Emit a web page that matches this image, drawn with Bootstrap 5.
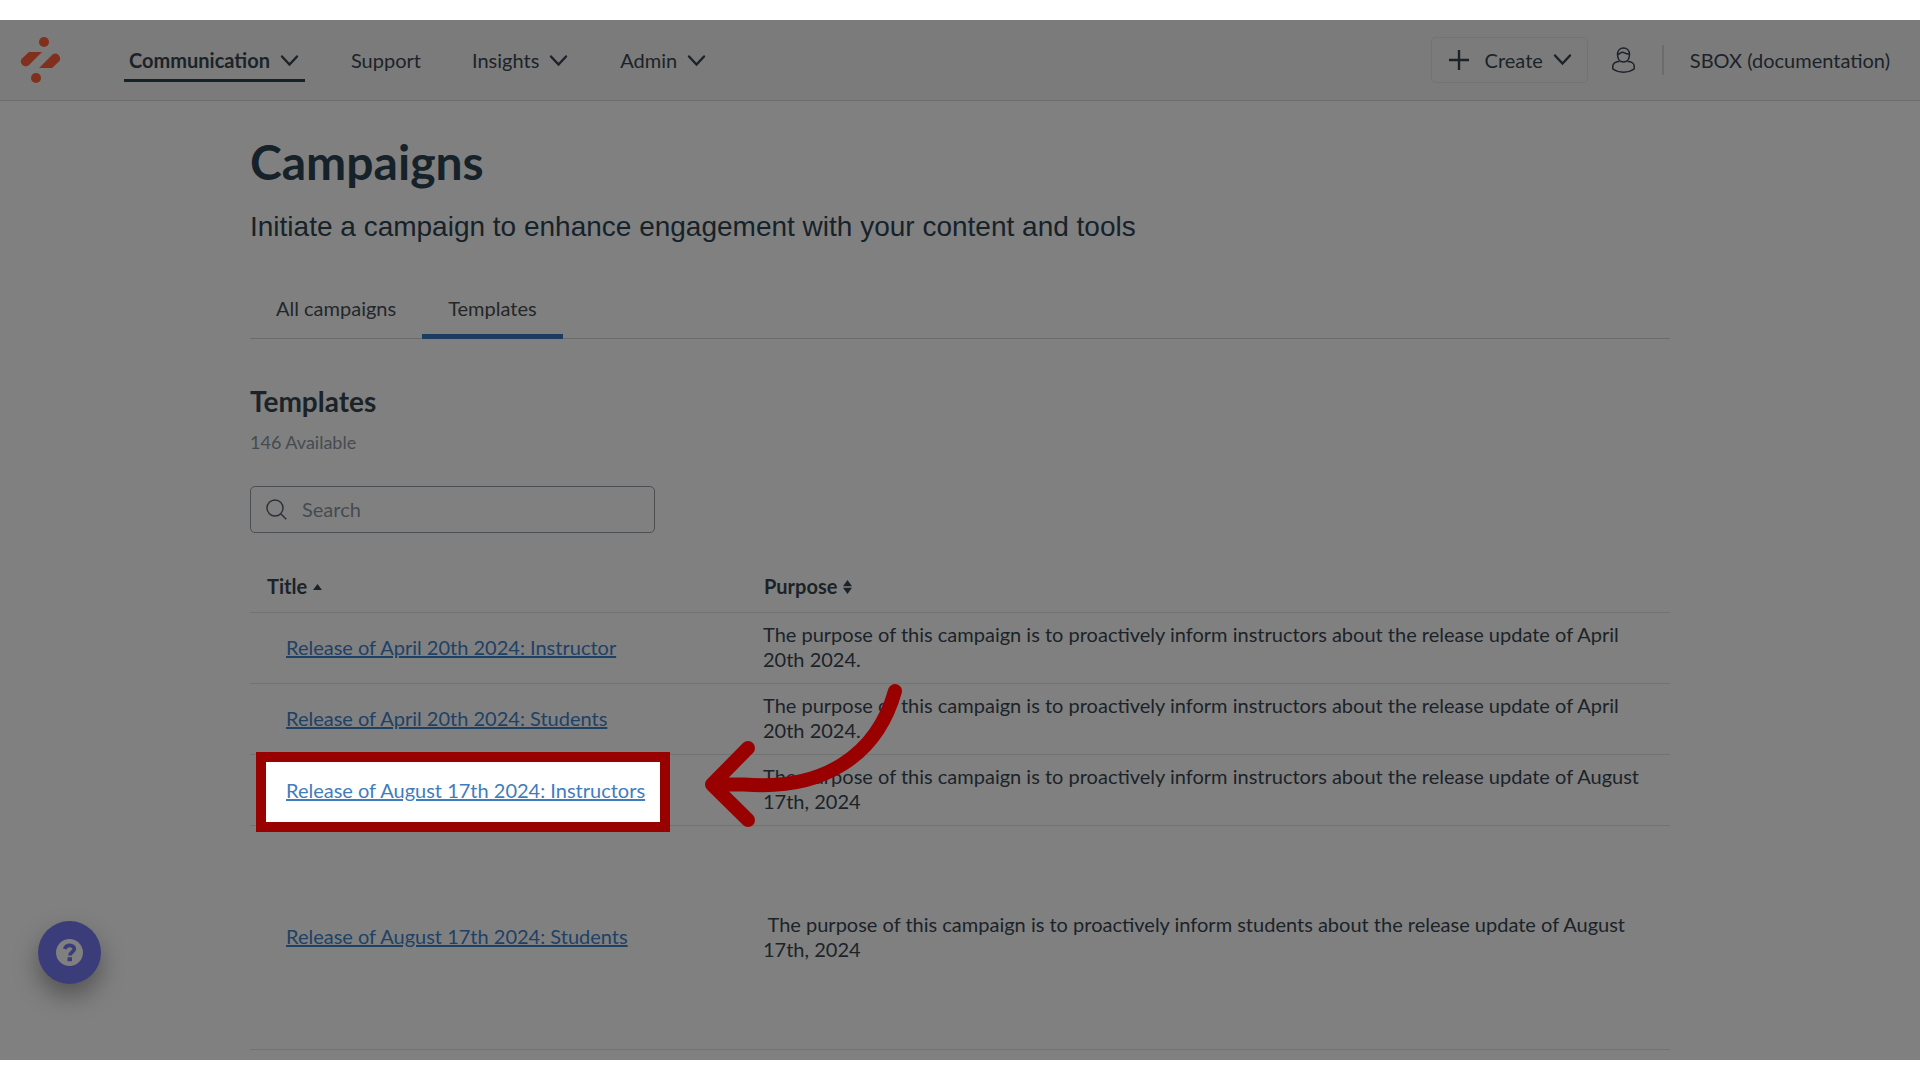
<!DOCTYPE html>
<html lang="en">
<head>
<meta charset="utf-8">
<meta name="viewport" content="width=device-width, initial-scale=1">
<title>Campaigns</title>
<link href="https://cdn.jsdelivr.net/npm/bootstrap@5.3.0/dist/css/bootstrap.min.css" rel="stylesheet">
<style>
  :root { --ink: #1b2329; --ink-strong: #16222a; --rule: #727272; --accent: #1b3b5f; --alert: #990000; }
  body { font-family: Lato, "Open Sans", sans-serif; font-size: 20px; line-height: 25px; color: var(--ink); background: #fff; padding: 20px 0; }
  .shell { background: #808080; min-height: calc(100vh - 40px); }
  .topbar { background: #7b7b7b; border-bottom: 1px solid #6e6e6e; height: 81px; padding: 0 30px 0 20px; }
  .topbar .nav-link { color: var(--ink); padding: 6px 5px; border-bottom: 3px solid transparent; margin-top: 4px; }
  .topbar .nav-link.active { font-weight: 700; border-bottom-color: var(--ink-strong); }
  .main-nav { gap: 41px; margin-left: 63px; }
  .create-btn { border: 1px solid #737373; border-radius: 4px; height: 46px; padding: 0 14px 0 17px; font-size: 20px; line-height: 25px; color: var(--ink); }
  .bar-split { width: 2px; height: 30px; background: #6b6b6b; margin: 0 26px 0 27px; }
  .page-wrap { max-width: 1420px; }
  .page-title { font-size: 48px; line-height: 58px; font-weight: 700; color: var(--ink-strong); margin: 32px 0 0; }
  .page-sub { font-family: "Liberation Sans", Arial, sans-serif; font-size: 28px; line-height: 34px; color: var(--ink-strong); margin: 19px 0 0; }
  .page-tabs { border-bottom: 1px solid #6b6b6b; margin-top: 38px; }
  .page-tabs .nav-link { color: #23272a; border: 0; border-radius: 0; border-bottom: 5px solid transparent; padding: 14px 26px 13px; margin-bottom: -1px; }
  .page-tabs .nav-link.active { background: none; color: #23272a; border-bottom-color: var(--accent); }
  .section-title { font-size: 28px; line-height: 34px; font-weight: 700; margin: 45px 0 0; }
  .count { font-size: 18px; line-height: 22px; color: #454b50; margin: 13px 0 0; }
  .search-box { width: 405px; height: 47px; border: 1px solid #4a4f53; border-radius: 5px; margin-top: 33px; padding: 0 15px; gap: 15px; }
  .search-box input { font-size: 20px; line-height: 25px; color: var(--ink); }
  .search-box input::placeholder { color: #454b50; opacity: 1; }
  .templates { --bs-table-bg: transparent; --bs-table-color: var(--ink); color: var(--ink); table-layout: fixed; margin: 29px 0 0; }
  .templates > :not(caption) > * > * { border-bottom: 1px solid var(--rule); vertical-align: middle; padding: 9px 16px 11px; }
  .templates > thead > tr > th { padding: 12px 17px 13px; font-weight: 700; border-bottom-color: var(--rule); }
  .templates > tbody > tr > td:first-child { padding-left: 36px; }
  .templates a { color: #1e4166; }
  .col-title { width: 35%; }
  .roomy { height: 224px; }
  .sort-btn { font-size: 20px; line-height: 25px; font-weight: 700; color: var(--ink); gap: 6px; }
  .spot a { position: relative; z-index: 2; color: #3f7dbd; }
  .spot-frame { z-index: 1; left: -30px; right: -25px; top: -26px; bottom: -29px; background: #fff; border: 10px solid var(--alert); }
  .spot-arrow { z-index: 3; left: 418px; top: -95px; }
  .help-fab { left: 38px; top: 921px; width: 63px; height: 63px; background: #3b3d7b; box-shadow: 0 12px 24px rgba(0,0,0,.35); }
</style>
<script src="https://cdn.jsdelivr.net/npm/bootstrap@5.3.0/dist/js/bootstrap.bundle.min.js"></script>
</head>
<body>
<div class="shell position-relative">
  <header class="topbar d-flex align-items-center">
    <a href="#" aria-label="Home" class="d-flex">
      <svg width="41" height="46" viewBox="0 0 41 46" fill="#81301d" aria-hidden="true">
        <circle cx="24" cy="5" r="5"/><circle cx="16" cy="41" r="5"/>
        <path d="M9 15H22L8.500 28.600A5 5 0 0 1 1.500 22Z"/>
        <path d="M32 31H19L32.500 17.400A5 5 0 0 1 39.500 24Z"/>
      </svg>
    </a>
    <nav class="nav main-nav" aria-label="Main">
      <a class="nav-link active d-flex align-items-center" href="#">Communication
        <svg class="ms-2" width="22" height="14" viewBox="0 0 22 14" fill="none" stroke="#1b2329" stroke-width="2.400" stroke-linecap="round"><path d="M4 2.500L11.500 10.500L19 2.500"/></svg></a>
      <a class="nav-link" href="#">Support</a>
      <a class="nav-link d-flex align-items-center" href="#">Insights
        <svg class="ms-2" width="22" height="14" viewBox="0 0 22 14" fill="none" stroke="#1b2329" stroke-width="2.400" stroke-linecap="round"><path d="M4 2.500L11.500 10.500L19 2.500"/></svg></a>
      <a class="nav-link d-flex align-items-center" href="#">Admin
        <svg class="ms-2" width="22" height="14" viewBox="0 0 22 14" fill="none" stroke="#1b2329" stroke-width="2.400" stroke-linecap="round"><path d="M4 2.500L11.500 10.500L19 2.500"/></svg></a>
    </nav>
    <button type="button" class="btn create-btn d-flex align-items-center ms-auto">
      <svg width="20" height="20" viewBox="0 0 20 20" stroke="#1b2329" stroke-width="2.400" aria-hidden="true"><path d="M0 10H20M10 0V20"/></svg>
      <span class="ms-3">Create</span>
      <svg class="ms-2" width="22" height="14" viewBox="0 0 22 14" fill="none" stroke="#1b2329" stroke-width="2.400" stroke-linecap="round"><path d="M4 2.500L11.500 10.500L19 2.500"/></svg>
    </button>
    <button type="button" class="btn border-0 p-0 d-flex ms-4" aria-label="Account">
      <svg width="23" height="26" viewBox="0 0 23 26" fill="none" stroke="#1b2329" stroke-width="1.500" stroke-linejoin="round">
        <path d="M5.500 7.500C5.500 3.500 8 1 11.500 1S17.500 3.500 17.500 7.500C17.500 12 15 15 11.500 15S5.500 12 5.500 7.500Z"/>
        <path d="M5.600 7.500C7.500 7.200 8.500 5.200 10.500 5.200S13 7.200 17.400 7"/>
        <path d="M7.500 14.500C3.500 14.500 .8 16.500 .8 19V22C4 24.200 7.500 25.200 11.500 25.200S19 24.200 22.200 22V19C22.200 16.500 19.500 14.500 15.500 14.500"/>
      </svg>
    </button>
    <span class="bar-split"></span>
    <span>SBOX (documentation)</span>
  </header>

  <main class="page-wrap mx-auto">
    <h1 class="page-title">Campaigns</h1>
    <p class="page-sub">Initiate a campaign to enhance engagement with your content and tools</p>
    <ul class="nav page-tabs">
      <li class="nav-item"><a class="nav-link" href="#">All campaigns</a></li>
      <li class="nav-item"><a class="nav-link active" href="#" aria-current="page">Templates</a></li>
    </ul>
    <h2 class="section-title">Templates</h2>
    <p class="count">146 Available</p>
    <div class="search-box d-flex align-items-center">
      <label for="q" class="d-flex" aria-label="Search"><svg width="21" height="21" viewBox="0 0 21 21" fill="none" stroke="#2a3035" stroke-width="1.400"><circle cx="9" cy="9" r="8"/><path d="M14.700 14.700L20.300 20.300"/></svg></label>
      <input id="q" type="search" class="border-0 bg-transparent p-0 flex-grow-1" placeholder="Search">
    </div>
    <table class="table templates">
      <thead>
        <tr>
          <th scope="col" class="col-title"><button type="button" class="sort-btn btn border-0 p-0 d-flex align-items-center">Title
            <svg width="9" height="8" viewBox="0 0 9 8" fill="#1b2329"><path d="M4.500 1L9 7H0Z"/></svg></button></th>
          <th scope="col"><button type="button" class="sort-btn btn border-0 p-0 d-flex align-items-center">Purpose
            <svg width="9" height="14" viewBox="0 0 9 14" fill="#1b2329"><path d="M4.500 0L9 6.200H0ZM4.500 14L9 7.800H0Z"/></svg></button></th>
        </tr>
      </thead>
      <tbody>
        <tr>
          <td><a href="#">Release of April 20th 2024: Instructor</a></td>
          <td>The purpose of this campaign is to proactively inform instructors about the release update of April 20th 2024.</td>
        </tr>
        <tr>
          <td><a href="#">Release of April 20th 2024: Students</a></td>
          <td>The purpose of this campaign is to proactively inform instructors about the release update of April 20th 2024.</td>
        </tr>
        <tr>
          <td>
            <div class="spot position-relative d-inline-block align-middle">
              <span class="spot-frame position-absolute"></span>
              <a href="#">Release of August 17th 2024: Instructors</a>
              <svg class="spot-arrow position-absolute" width="200" height="146" viewBox="0 0 200 146" fill="none" stroke="#990000" stroke-width="14" stroke-linecap="round" stroke-linejoin="round" aria-hidden="true">
                <path d="M191 8C173 72 120 108 40 101.500Q20 101.500 8 101.500M44 65L8 101.500L44 137"/>
              </svg>
            </div>
          </td>
          <td>The purpose of this campaign is to proactively inform instructors about the release update of August 17th, 2024</td>
        </tr>
        <tr class="roomy">
          <td><a href="#">Release of August 17th 2024: Students</a></td>
          <td>&nbsp;The purpose of this campaign is to proactively inform students about the release update of August 17th, 2024</td>
        </tr>
      </tbody>
    </table>
  </main>
</div>
<button type="button" class="help-fab position-absolute border-0 rounded-circle p-0 d-flex align-items-center justify-content-center" aria-label="Help">
  <svg width="27" height="27" viewBox="0 0 27 27"><circle cx="13.500" cy="13.500" r="13.500" fill="#808080"/><path d="M8.800 10C9.500 7.500 11.300 6.300 13.700 6.300C16.500 6.300 18.300 7.900 18.300 10C18.300 13 14 13 14 16.500" fill="none" stroke="#3b3d7b" stroke-width="3.800"/><rect x="11.500" y="18.200" width="4.500" height="4" fill="#3b3d7b"/></svg>
</button>
</body>
</html>
